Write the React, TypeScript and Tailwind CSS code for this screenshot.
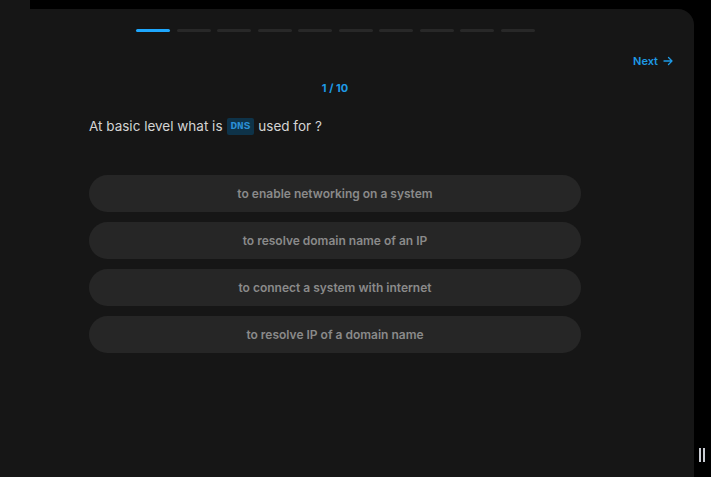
import React from "react";

const options = [
  "to enable networking on a system",
  "to resolve domain name of an IP",
  "to connect a system with internet",
  "to resolve IP of a domain name",
];

export default function App() {
  return (
    <div
      className="w-[711px] h-[477px] bg-black flex overflow-hidden"
      style={{ fontFamily: "Inter, 'Noto Sans', sans-serif" }}
    >
      <div className="flex flex-col w-[694px]">
        <div className="w-[30px] h-[9px] bg-[#161616]" />
        <div className="flex-1 bg-[#161616] rounded-tr-[16px] flex flex-col">
          <div className="flex gap-[6.5px] ml-[136px] mt-[20px]">
            {Array.from({ length: 10 }).map((_, i) => (
              <div
                key={i}
                className={
                  i === 0
                    ? "w-[34px] h-[3px] rounded-full bg-[#1ea7fd]"
                    : "w-[34px] h-[3px] rounded-full bg-[#282828]"
                }
              />
            ))}
          </div>
          <div className="flex justify-end pr-[21px] mt-[21px]">
            <div className="flex items-center gap-[5px] text-[11px] font-semibold text-[#1e9ae6] leading-[16px]">
              <span>Next</span>
              <svg width="10" height="10" viewBox="0 0 10 10" fill="none" stroke="#1e9ae6" strokeWidth="1.3" strokeLinecap="round" strokeLinejoin="round">
                <path d="M1 5h8M5.5 1.5 9 5 5.5 8.5" />
              </svg>
            </div>
          </div>
          <div className="ml-[89px] w-[492px] flex flex-col">
            <div className="text-center text-[11px] font-bold text-[#1e9ae6] leading-[16px] mt-[11px]">
              1 / 10
            </div>
            <div className="mt-[20px] text-[13.5px] text-[#d4d4d4] leading-[20px] flex items-center">
              <span>At basic level what is</span>
              <span
                className="mx-[4px] px-[4px] h-[17px] rounded-[2px] bg-[#0e3349] text-[#2b90d6] text-[11px] font-semibold flex items-center"
                style={{ fontFamily: "'Liberation Mono', monospace" }}
              >
                DNS
              </span>
              <span>used for ?</span>
            </div>
            <div className="mt-[39px] flex flex-col gap-[10px]">
              {options.map((o) => (
                <div
                  key={o}
                  className="h-[37px] rounded-full bg-[#262626] flex items-center justify-center text-[12px] font-semibold text-[#8a8a8a]"
                >
                  {o}
                </div>
              ))}
            </div>
          </div>
        </div>
      </div>
      <div className="flex-1 flex items-end justify-center pb-[15px]">
        <div className="flex gap-[2px] h-[14px] mr-[1px]">
          <div className="w-[2px] h-full bg-[#c9ccd2]" />
          <div className="w-[2px] h-full bg-[#c9ccd2]" />
        </div>
      </div>
    </div>
  );
}
